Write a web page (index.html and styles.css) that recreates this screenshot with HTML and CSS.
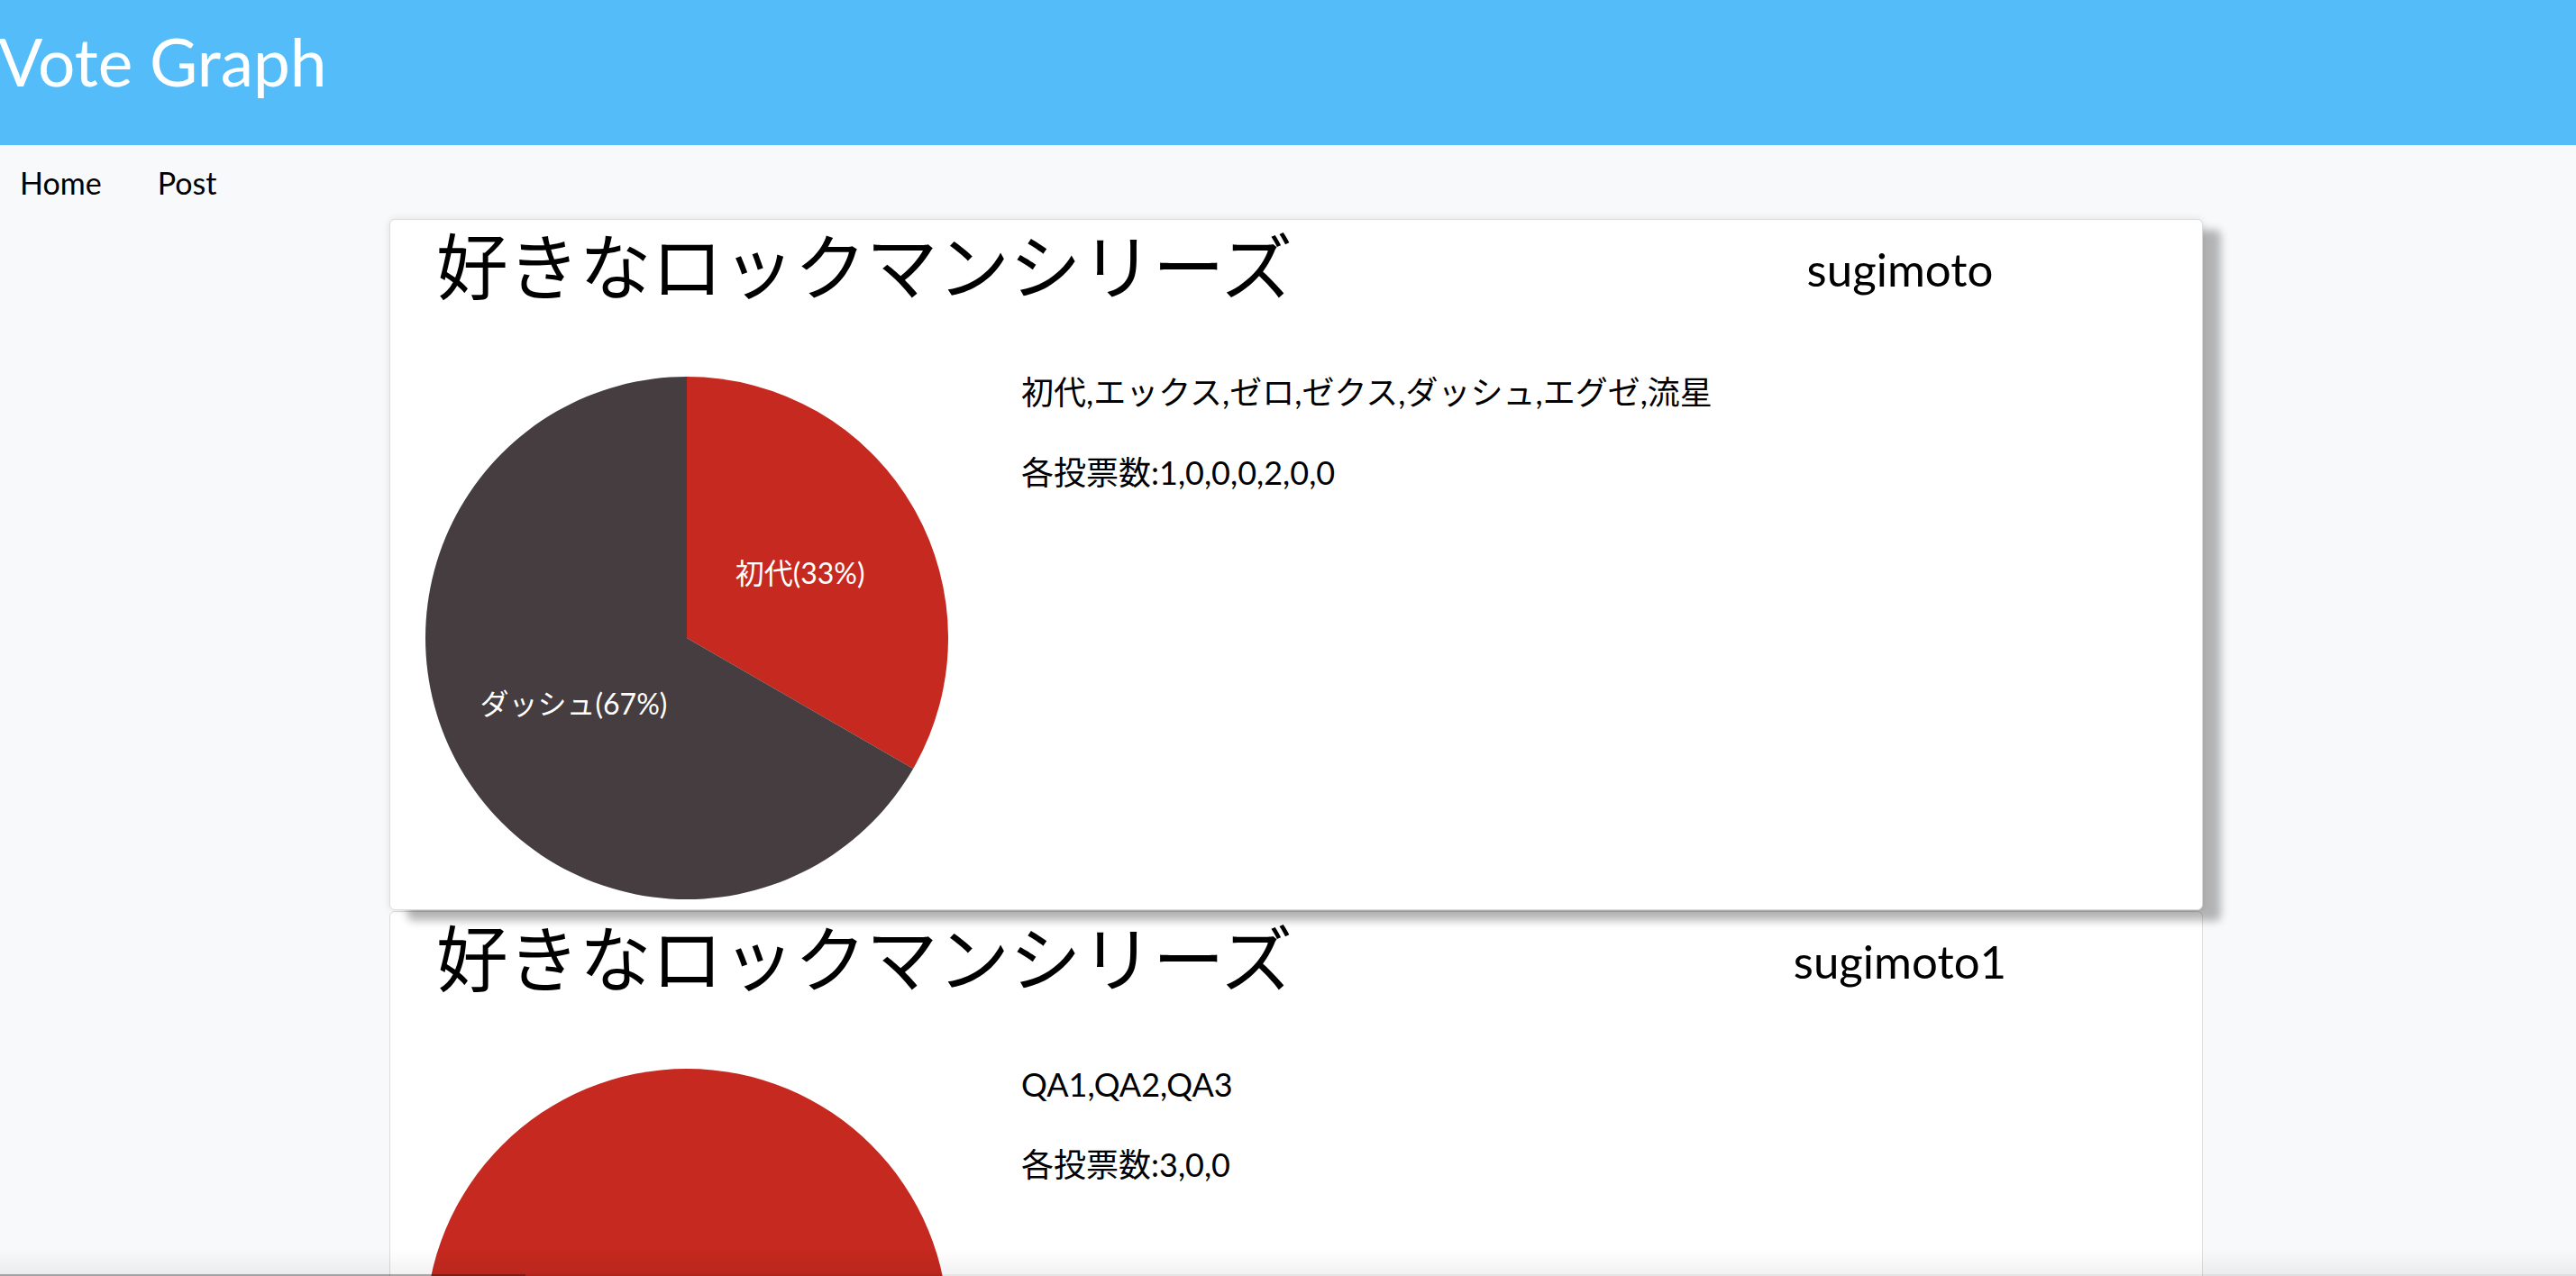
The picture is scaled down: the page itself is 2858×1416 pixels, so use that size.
FILE: index.html
```html
<!DOCTYPE html>
<html lang="ja">
<head>
<meta charset="utf-8">
<title>Vote Graph</title>
<link rel="stylesheet" href="styles.css">
</head>
<body>
<header class="topbar">
  <h1 class="brand">Vote Graph</h1>
</header>
<nav class="menu">
  <a class="menu-link" href="#">Home</a>
  <a class="menu-link" href="#">Post</a>
</nav>
<main class="list">
  <section class="card card--raised">
    <div class="card-head">
      <h2 class="card-title">好きなロックマンシリーズ</h2>
      <div class="card-author">sugimoto</div>
    </div>
    <div class="card-body">
      <div class="chart-col">
        <svg class="pie" width="580" height="580" viewBox="0 0 580 580">
          <path class="slice-red" d="M290,290 L290,0 A290,290 0 0 1 541.15,435 Z"/>
          <path class="slice-dark" d="M290,290 L541.15,435 A290,290 0 1 1 290,0 Z"/>
          <text class="pie-label" x="415.6" y="217.5">初代(33%)</text>
          <text class="pie-label" x="164.4" y="362.5">ダッシュ(67%)</text>
        </svg>
      </div>
      <div class="info-col">
        <p class="info">初代,エックス,ゼロ,ゼクス,ダッシュ,エグゼ,流星</p>
        <p class="info">各投票数:1,0,0,0,2,0,0</p>
      </div>
    </div>
  </section>
  <section class="card">
    <div class="card-head">
      <h2 class="card-title">好きなロックマンシリーズ</h2>
      <div class="card-author">sugimoto1</div>
    </div>
    <div class="card-body">
      <div class="chart-col">
        <svg class="pie" width="580" height="580" viewBox="0 0 580 580">
          <circle class="slice-red" cx="290" cy="290" r="290"/>
          <text class="pie-label" x="290" y="435">QA1(100%)</text>
        </svg>
      </div>
      <div class="info-col">
        <p class="info">QA1,QA2,QA3</p>
        <p class="info">各投票数:3,0,0</p>
      </div>
    </div>
  </section>
</main>
<div class="viewport-shade"><div class="shade-thumb"></div></div>
</body>
</html>
```
FILE: styles.css
```css
html, body {
  margin: 0;
  padding: 0;
}
body {
  background: #f8f9fa;
  font-family: Lato, "Noto Sans CJK JP", sans-serif;
  color: #000;
}
.topbar {
  height: 161px;
  box-sizing: border-box;
  padding-top: 32px;
  background: #54bdf9;
}
.brand {
  margin: 0 0 0 -2px;
  font-size: 73px;
  line-height: 1;
  font-weight: 400;
  color: #fff;
}
.menu {
  height: 81px;
  box-sizing: border-box;
  padding: 25px 0 0 22px;
  display: flex;
  gap: 62px;
  background: #f8f9fa;
}
.menu-link {
  font-size: 34px;
  line-height: 1;
  color: #000;
  text-decoration: none;
}
.list {
  width: 2012px;
  margin: 1px 0 0 432px;
}
.card {
  background: #fff;
  border: 1px solid #dcdcdc;
  border-radius: 6px;
  padding: 8px 0 11px;
  margin-bottom: 1px;
}
.card--raised {
  position: relative;
  z-index: 1;
  box-shadow: 0 0 8px rgba(0, 0, 0, 0.10), 20px 12px 10px rgba(0, 0, 0, 0.28);
}
.card-head {
  display: flex;
  align-items: flex-start;
}
.card-title {
  flex: 0 0 66.6667%;
  box-sizing: border-box;
  margin: 0;
  padding-left: 51px;
  font-size: 79.5px;
  line-height: 1;
  font-weight: 400;
  font-family: "Noto Sans CJK JP", sans-serif;
}
.card-author {
  flex: 1;
  text-align: center;
  padding-top: 21px;
  font-size: 51px;
  line-height: 1;
}
.card-body {
  display: flex;
  margin-top: 78px;
}
.chart-col {
  flex: 0 0 700px;
}
.pie {
  display: block;
  margin: 8.5px 0 0 39px;
}
.slice-red {
  fill: #c5291f;
}
.slice-dark {
  fill: #453d3f;
}
.pie-label {
  fill: #fff;
  font-size: 32px;
  font-family: Lato, "Noto Sans CJK JP", sans-serif;
  text-anchor: middle;
  dominant-baseline: central;
}
.info-col {
  flex: 1;
}
.info {
  margin: 0 0 38px;
  font-size: 36px;
  line-height: 51px;
}
.viewport-shade {
  position: fixed;
  left: 0;
  right: 0;
  bottom: 0;
  height: 28px;
  background: linear-gradient(to bottom, rgba(0, 0, 0, 0), rgba(0, 0, 0, 0.05));
  border-bottom: 2px solid rgba(0, 0, 0, 0.10);
  pointer-events: none;
  z-index: 5;
}
.shade-thumb {
  position: absolute;
  left: 0;
  bottom: -2px;
  width: 583px;
  height: 2px;
  background: rgba(0, 0, 0, 0.28);
}
```
